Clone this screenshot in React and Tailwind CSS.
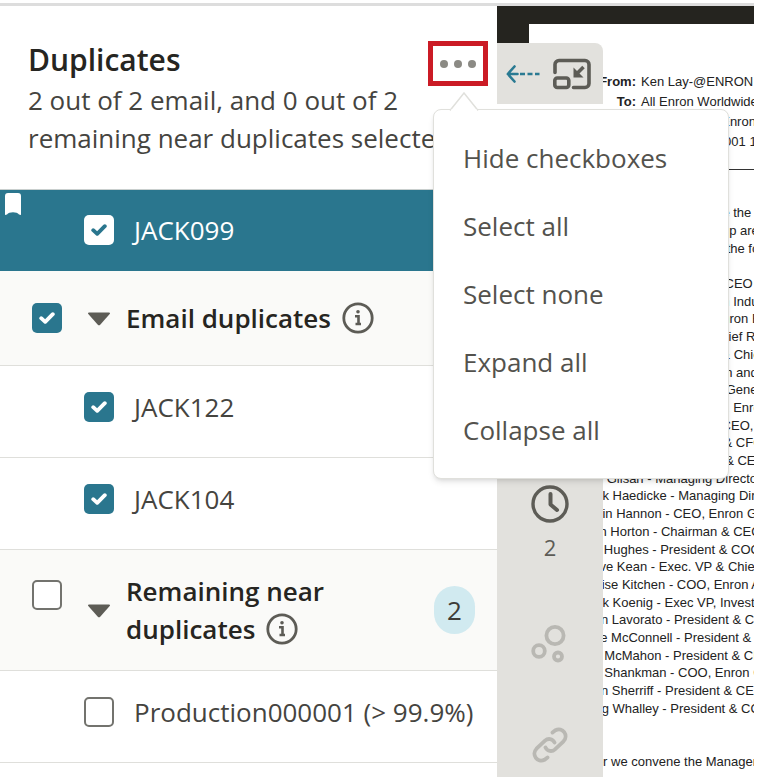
import React, { useState } from 'react';
import clsx from 'clsx';

const menuItems = ['Hide checkboxes', 'Select all', 'Select none', 'Expand all', 'Collapse all'];

const mailHeaders = [
  { label: 'From:', value: 'Ken Lay-@ENRON' },
  { label: 'To:', value: 'All Enron Worldwide@ENRON' },
  { label: 'Cc:', value: 'Ken Lay/ETS/Enron' },
  { label: 'Date:', value: 'Friday 10/26/2001 1:18 PM' },
];

const intro = [
  'I am pleased to announce the',
  "company's chief leadership are",
  'Committee will consist of the following:',
];

const committee = [
  'Ken Lay - Chairman and CEO',
  'Ray Bowen - COO, Enron Industrial',
  'Michael Brown - COO, Enron Europe',
  'Rick Buy - Exec. VP & Chief Risk Officer',
  'Rick Causey - Exec. VP & Chief Accounting',
  'Dave Delainey - Chairman and CEO',
  'Jim Derrick - Exec. VP & General Counsel',
  'Janet Dietrich - President, Enron Energy',
  'Jim Fallon - President & CEO, Enron',
  'Andy Fastow - Exec. VP & CFO',
  'Mark Frevert - Chairman & CEO',
  'Ben Glisan - Managing Director',
  'Mark Haedicke - Managing Director',
  'Kevin Hannon - CEO, Enron Global',
  'Stan Horton - Chairman & CEO',
  'Jim Hughes - President & COO',
  'Steve Kean - Exec. VP & Chief of Staff',
  'Louise Kitchen - COO, Enron Americas',
  'Mark Koenig - Exec VP, Investor',
  'John Lavorato - President & CEO',
  'Mike McConnell - President & CEO',
  'Jeff McMahon - President & CEO',
  'Jeff Shankman - COO, Enron Global',
  'John Sherriff - President & CEO',
  'Greg Whalley - President & COO',
];

const Checkbox = ({ id, label, defaultChecked, inverted }) => {
  const [checked, setChecked] = useState(defaultChecked);

  return (
    <span className="grid size-[30px] shrink-0 place-items-center">
      <input
        id={id}
        type="checkbox"
        aria-label={label}
        checked={checked}
        onChange={(e) => setChecked(e.target.checked)}
        className={clsx(
          'col-start-1 row-start-1 size-[30px] appearance-none rounded-[5px]',
          checked && inverted && 'bg-white',
          checked && !inverted && 'bg-[#2a768e]',
          !checked && 'border-2 border-[#73736e] bg-white'
        )}
      />
      {checked && (
        <svg
          viewBox="0 0 16 12"
          className={clsx(
            'pointer-events-none col-start-1 row-start-1 h-3 w-4',
            inverted ? 'text-[#2a768e]' : 'text-white'
          )}
          fill="none"
          stroke="currentColor"
          strokeWidth="3.8"
          strokeLinecap="round"
          strokeLinejoin="round"
        >
          <path d="M2.2 6.2 6.2 9.8 13.8 2.2" />
        </svg>
      )}
    </span>
  );
};

const Caret = () => (
  <svg viewBox="0 0 24 14" className="h-[14px] w-6" fill="#5d5c56">
    <path d="M2 .5h20c1 0 1.300.8.7 1.500L13.200 12.800c-.7.7-1.700.7-2.400 0L1.300 2C.7 1.300 1 .5 2 .5Z" />
  </svg>
);

const InfoIcon = () => (
  <svg viewBox="0 0 32 32" className="size-8" fill="none" stroke="#5d5c56">
    <circle cx="16" cy="16" r="14.200" strokeWidth="2.800" />
    <path d="M13 14.200h3.500v8M13.500 22h5.500" strokeWidth="2.600" />
    <circle cx="16" cy="9.800" r="1.800" fill="#5d5c56" stroke="none" />
  </svg>
);

const GroupHeader = ({ id, title, lastWord, defaultChecked, count }) => (
  <div className="flex min-h-[95px] items-center border-b border-[#dfdfdb] bg-[#fafaf8] py-[22px] pr-[22px] pl-8">
    <div className={clsx(count && 'mb-[30px]')}>
      <Checkbox id={id} label={`${title} ${lastWord}`} defaultChecked={defaultChecked} />
    </div>
    <button type="button" aria-label={`Toggle ${title} ${lastWord}`} className="ml-[25px] pt-[2px]">
      <Caret />
    </button>
    <h2 className="ml-[15px] flex-1 text-[26px] leading-[38px] font-semibold text-[#262521]">
      {title}{' '}
      <span className="inline-flex items-center gap-[11px]">
        {lastWord}
        <button type="button" aria-label={`About ${title} ${lastWord}`}>
          <InfoIcon />
        </button>
      </span>
    </h2>
    {count && (
      <span className="grid h-12 w-[41px] place-items-center rounded-full bg-[#d1eaf0] text-[26px] text-[#3d3c38]">
        {count}
      </span>
    )}
  </div>
);

const DocRow = ({ id, name, defaultChecked, active }) => (
  <div
    className={clsx(
      'relative flex items-center gap-5 border-b pl-[84px]',
      active
        ? 'border-[#2a768e] bg-[#2a768e] py-[25px] text-white'
        : 'border-[#dfdfdb] bg-white pt-[26px] pb-[35px] text-[#45443f]'
    )}
  >
    {active && (
      <svg viewBox="0 0 16 22" className="absolute top-[3px] left-[5px] h-[22px] w-4" fill="#fff">
        <path d="M3 0h10a3 3 0 0 1 3 3v19l-2-.4c-2-3-10-3-12 0l-2 .4V3a3 3 0 0 1 3-3Z" />
      </svg>
    )}
    <Checkbox id={id} defaultChecked={defaultChecked} inverted={active} />
    <label htmlFor={id} className="text-[26px] leading-[30px] whitespace-nowrap">
      {name}
    </label>
  </div>
);

const OptionsMenu = () => (
  <div className="absolute top-full left-[5px] z-20 mt-[23px] w-[296px] rounded-lg border border-[#e0e0dc] bg-white py-[14px] shadow-md">
    <svg viewBox="0 0 30 19" className="absolute -top-[18px] left-[15px] h-[19px] w-[30px]">
      <path d="M1 18.500 15 1l14 17.500" fill="#fff" stroke="#e0e0dc" strokeWidth="1.500" />
      <path d="M2 18.500h26" stroke="#fff" strokeWidth="2" />
    </svg>
    <ul>
      {menuItems.map((item) => (
        <li key={item}>
          <button type="button" className="h-[68px] w-full px-[29px] text-left text-[26px] text-[#53524d]">
            {item}
          </button>
        </li>
      ))}
    </ul>
  </div>
);

const DuplicatesPanel = () => (
  <aside className="w-[497px] shrink-0 bg-white">
    <header className="flex justify-between border-b border-[#c9cfce] pt-[35px] pr-[9px] pb-8 pl-7">
      <div className="w-[424px]">
        <h1 className="text-[30px] leading-[38px] font-semibold text-[#262521]">Duplicates</h1>
        <p className="pt-[2px] text-[26px] leading-[38px] text-[#45443f]">
          2 out of 2 email, and 0 out of 2 remaining near duplicates selected
        </p>
      </div>
      <div className="relative -ml-6 h-[45px] w-[60px] shrink-0">
        <button
          type="button"
          aria-label="More options"
          aria-expanded="true"
          className="grid h-full w-full place-items-center border-[5px] border-[#cb1b25]"
        >
          <svg viewBox="0 0 36 8" className="h-2 w-9" fill="#8b8a84">
            <circle cx="4" cy="4" r="4" />
            <circle cx="18" cy="4" r="4" />
            <circle cx="32" cy="4" r="4" />
          </svg>
        </button>
        <OptionsMenu />
      </div>
    </header>
    <DocRow id="jack099" name="JACK099" defaultChecked active />
    <GroupHeader id="email-duplicates" title="Email" lastWord="duplicates" defaultChecked />
    <DocRow id="jack122" name="JACK122" defaultChecked />
    <DocRow id="jack104" name="JACK104" defaultChecked />
    <GroupHeader id="near-duplicates" title="Remaining near" lastWord="duplicates" defaultChecked={false} count={2} />
    <DocRow id="production1" name="Production000001 (> 99.9%)" defaultChecked={false} />
  </aside>
);

// toolbar that floats on top of the document
const ContextRail = () => (
  <nav className="absolute top-[37px] bottom-0 left-0 flex w-[106px] flex-col rounded-tr-lg bg-white">
    <div className="flex h-[61px] items-center gap-3 rounded-tr-lg bg-[#e2e1dd] pl-[9px]">
      <button type="button" aria-label="Previous">
        <svg viewBox="0 0 34 18" className="h-[18px] w-[34px]" fill="none" stroke="#2a7a92" strokeWidth="2.600">
          <path d="M8.500 1.500 1.800 9l6.700 7.500M2 9h9.500" strokeLinecap="round" strokeLinejoin="round" />
          <path d="M14 9h5M21.500 9h5M29 9h4.500" />
        </svg>
      </button>
      <button type="button" aria-label="Collapse context panel">
        <svg viewBox="0 0 40 32" className="h-8 w-10" fill="none" stroke="#5d5c56" strokeWidth="3.600">
          <path d="M3 14.500V6.500a4 4 0 0 1 4-4h26a4 4 0 0 1 4 4v19a4 4 0 0 1-4 4H21.500" strokeLinecap="round" />
          <rect x="2.800" y="20" width="14" height="9.500" rx="2.500" />
          <path d="M31.500 9 24.500 16" />
          <path d="M21.500 9.500v10h10z" fill="#5d5c56" stroke="none" />
        </svg>
      </button>
    </div>
    <div className="mt-2 flex flex-1 flex-col items-center justify-end gap-16 bg-[#e2e1dd] pb-[14px]">
      <button type="button" className="flex flex-col items-center gap-[10px] text-[22px] leading-7 text-[#5d5c56]">
        <svg viewBox="0 0 38 38" className="size-[38px]" fill="none" stroke="#5d5c56" strokeWidth="3.400">
          <circle cx="19" cy="19" r="17" />
          <path d="M19.500 9v10.500l6.500 5.500" strokeWidth="4" strokeLinecap="round" strokeLinejoin="round" />
        </svg>
        2
      </button>
      <button type="button" aria-label="Clusters">
        <svg viewBox="0 0 38 38" className="size-[38px]" fill="none" stroke="#b9b8b3" strokeWidth="3.800">
          <circle cx="24" cy="10.500" r="8.600" />
          <circle cx="8" cy="26" r="5.800" />
          <circle cx="27" cy="31.500" r="4" />
        </svg>
      </button>
      <button type="button" aria-label="Links">
        <svg viewBox="0 0 36 36" className="size-9" fill="none" stroke="#b9b8b3" strokeWidth="3.800" strokeLinecap="round">
          <path d="M13.500 20.500c2 4 6.500 4.500 9.500 1.800l8.500-8C37 8.500 30.500-.5 23.500 3.200L20.500 5.500" />
          <path d="M22.500 15.500c-2-4-6.500-4.500-9.500-1.800l-8.500 8C-1 27.500 5.500 36.500 12.500 32.800l3-2.300" />
        </svg>
      </button>
    </div>
  </nav>
);

const DocumentViewer = () => (
  <main className="relative flex min-w-0 flex-1 flex-col overflow-hidden bg-[#25241f] pt-[18px]">
    <article className="ml-8 flex-1 bg-white pt-12 pl-[51px] font-['Liberation_Sans',Arial,sans-serif] text-[13px] whitespace-nowrap text-[#222]">
      <dl className="grid grid-cols-[56px_auto] gap-x-[5px] leading-5">
        {mailHeaders.map(({ label, value }) => (
          <React.Fragment key={label}>
            <dt className="text-right font-bold">{label}</dt>
            <dd>{value}</dd>
          </React.Fragment>
        ))}
      </dl>
      <hr className="mt-[17px] border-[#333]" />
      <div className="mt-[34px] leading-[18px]">
        {intro.map((line) => (
          <p key={line}>{line}</p>
        ))}
      </div>
      <ul className="mt-[17px] grid h-[442px] content-between leading-[17px]">
        {committee.map((member) => (
          <li key={member}>{member}</li>
        ))}
      </ul>
      <p className="mt-9 leading-[18px]">After we convene the Management</p>
    </article>
    <ContextRail />
  </main>
);

const App = () => {
  return (
    <div className="flex min-h-screen flex-col bg-white pt-[3px] pr-[5px] pb-[2px] font-['Open_Sans','Noto_Sans',sans-serif]">
      <div className="flex flex-1 border-t-[3px] border-[#dddddd]">
        <DuplicatesPanel />
        <DocumentViewer />
      </div>
    </div>
  );
};

export default App;
